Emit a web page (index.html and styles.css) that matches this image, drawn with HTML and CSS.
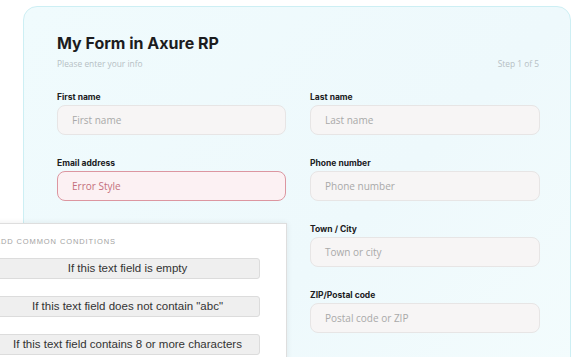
FILE: index.html
```html
<!DOCTYPE html>
<html>
<head>
    <title>My Form in Axure RP</title>
    <meta charset="UTF-8">
    <link rel="stylesheet" href="styles.css">
</head>
<body>
    <!-- Formulaire -->
    <div class="card">
        <h1>My Form in Axure RP</h1>
        <div class="sub">
            <span>Please enter your info</span>
            <span>Step 1 of 5</span>
        </div>
        <div class="fields">
            <div class="col">
                <div class="field">
                    <label>First name</label>
                    <div class="input">First name</div>
                </div>
                <div class="field">
                    <label>Email address</label>
                    <div class="input error">Error Style</div>
                </div>
            </div>
            <div class="col">
                <div class="field">
                    <label>Last name</label>
                    <div class="input">Last name</div>
                </div>
                <div class="field">
                    <label>Phone number</label>
                    <div class="input">Phone number</div>
                </div>
                <div class="field">
                    <label>Town / City</label>
                    <div class="input">Town or city</div>
                </div>
                <div class="field">
                    <label>ZIP/Postal code</label>
                    <div class="input">Postal code or ZIP</div>
                </div>
            </div>
        </div>
    </div>

    <!-- Panneau des conditions -->
    <div class="panel">
        <div class="panel-title">ADD COMMON CONDITIONS</div>
        <div class="btn">If this text field is empty</div>
        <div class="btn">If this text field does not contain "abc"</div>
        <div class="btn">If this text field contains 8 or more characters</div>
    </div>
</body>
</html>
```

FILE: styles.css
```css
html, body {
    overflow: hidden;
}
body {
    margin: 0;
    padding: 6px 0 0 23px;
    background: #ffffff;
    font-family: Inter, "Noto Sans", sans-serif;
    position: relative;
    height: 357px;
    box-sizing: border-box;
}
.card {
    width: 548px;
    box-sizing: border-box;
    padding: 26px 31px 40px 33px;
    border: 1px solid #cdeff4;
    border-radius: 14px;
    background: linear-gradient(135deg, #f0fbfd, #eef9fc 60%, #f3fcfd);
}
h1 {
    margin: 0;
    font-size: 16px;
    line-height: 20px;
    font-weight: 700;
    color: #1c1c1e;
}
.sub {
    display: flex;
    justify-content: space-between;
    margin-top: 6px;
    font-family: "Open Sans", sans-serif;
    font-size: 8.4px;
    line-height: 10px;
    color: #b6c0c4;
}
.fields {
    display: grid;
    grid-template-columns: 229px 230px;
    column-gap: 24px;
    margin-top: 22px;
}
.col {
    display: flex;
    flex-direction: column;
    gap: 22px;
}
.field label {
    display: block;
    font-size: 8.5px;
    line-height: 12px;
    font-weight: 700;
    color: #202022;
    margin-bottom: 2px;
}
.input {
    height: 30px;
    box-sizing: border-box;
    padding-left: 14px;
    border: 1px solid #e7e5e5;
    border-radius: 8px;
    background: #f7f5f5;
    font-family: "Open Sans", sans-serif;
    font-size: 10px;
    line-height: 28px;
    color: #a9a9a9;
}
.input.error {
    border-color: #dc96a0;
    background: #fcf1f3;
    color: #c46f7c;
}
.panel {
    position: absolute;
    left: -14px;
    top: 223px;
    width: 301px;
    height: 160px;
    box-sizing: border-box;
    padding: 13px 26px 0 8px;
    background: #ffffff;
    border: 1px solid #dedede;
    box-shadow: 0 0 6px rgba(0, 0, 0, 0.08);
}
.panel-title {
    font-family: "Liberation Sans", Arial, sans-serif;
    font-size: 7.5px;
    line-height: 10px;
    letter-spacing: 0.9px;
    color: #a3a3a3;
    margin-bottom: 11px;
}
.btn {
    height: 21px;
    box-sizing: border-box;
    margin-bottom: 17px;
    border: 1px solid #dcdcdc;
    border-radius: 3px;
    background: #efefef;
    text-align: center;
    font-family: "Liberation Sans", Arial, sans-serif;
    font-size: 11.5px;
    line-height: 19px;
    color: #333333;
}
```
